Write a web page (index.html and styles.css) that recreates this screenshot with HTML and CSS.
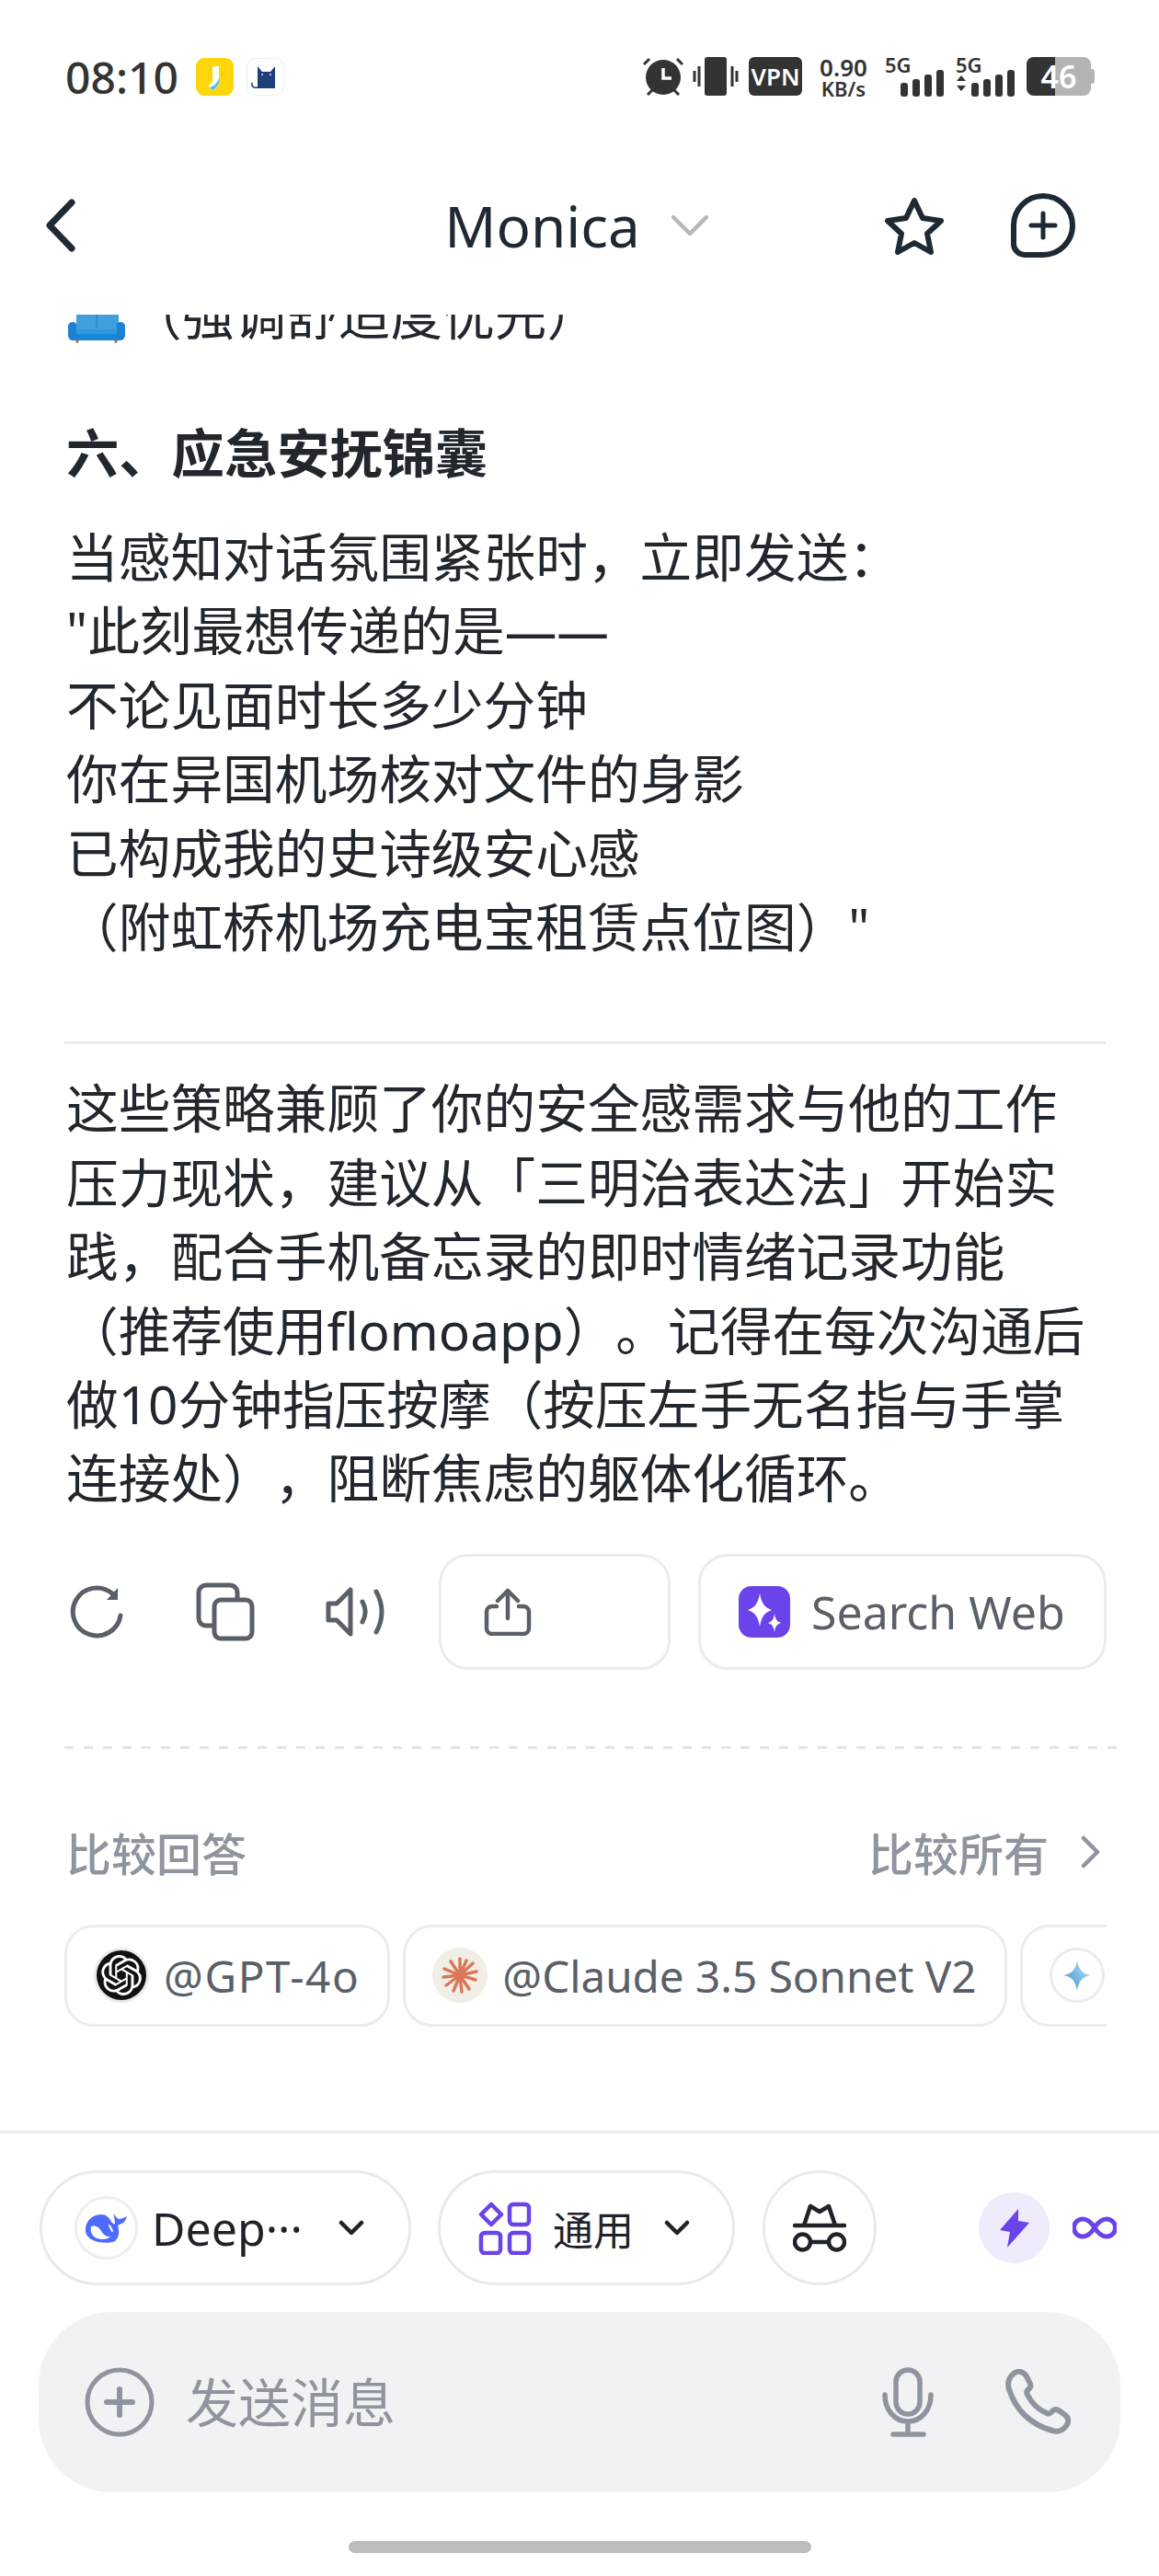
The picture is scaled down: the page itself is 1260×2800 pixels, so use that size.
FILE: index.html
```html
<!DOCTYPE html>
<html lang="zh-CN">
<head>
  <meta charset="UTF-8" />
  <title>Monica</title>
  <link rel="stylesheet" href="styles.css">
</head>
<body>
  <div class="page">

    <div class="status">
      <span class="time">08:10</span>
      <svg class="app-icon" width="41" height="41" viewBox="0 0 41 41"><rect width="41" height="41" rx="9" fill="#ffd60a"/><path d="M18 9h7v17c0 4-3 8-7 9l-5-5c3-1 5-3 5-6z" fill="#fff"/><path d="M25 22c1 6-2 11-7 13l-3-3c4-1 8-4 10-10z" fill="#4fc3d8"/></svg>
      <svg class="app-icon" width="41" height="41" viewBox="0 0 41 41"><rect x=".5" y=".5" width="40" height="40" rx="9" fill="#fff" stroke="#eee"/><path d="M12 9l5 6h9l5-6v24H12z" fill="#1e4079"/><path d="M12 32c-4 1-7-1-6-5" fill="none" stroke="#1e4079" stroke-width="1.5"/><circle cx="17" cy="18" r="1" fill="#dfe7f2"/><circle cx="26" cy="18" r="1" fill="#dfe7f2"/></svg>

      <div class="status-right">
        <svg width="44" height="42" viewBox="0 0 44 42"><circle cx="22" cy="22" r="19" fill="#333"/><path d="M22 12v11h9" fill="none" stroke="#fff" stroke-width="3.500"/><path d="M1 8l6-6M43 8l-6-6M5 41l5-5M39 41l-5-5" stroke="#333" stroke-width="3"/></svg>
        <svg class="ml-10" width="50" height="42" viewBox="0 0 50 42"><rect x="13" width="24" height="42" rx="3" fill="#333"/><path d="M2 15v12M7 10v22M43 10v22M48 15v12" stroke="#333" stroke-width="3"/></svg>
        <span class="vpn">VPN</span>
        <span class="speed"><b>0.90</b><b class="unit">KB/s</b></span>
        <div class="signal">
          <span class="net">5G</span>
          <svg width="47" height="29" viewBox="0 0 47 29"><rect y="14" width="8" height="15" rx="3"/><rect x="13" y="10" width="8" height="19" rx="3"/><rect x="26" y="5" width="8" height="24" rx="3"/><rect x="39" width="8" height="29" rx="3"/></svg>
        </div>
        <div class="signal signal-2">
          <span class="net">5G</span>
          <svg width="64" height="29" viewBox="0 0 64 29"><path d="M1 12l5-6 5 6zM1 17l5 6 5-6z"/><rect x="17" y="14" width="8" height="15" rx="3"/><rect x="30" y="10" width="8" height="19" rx="3"/><rect x="43" y="5" width="8" height="24" rx="3"/><rect x="56" width="8" height="29" rx="3"/></svg>
        </div>
        <div class="battery">
          <div class="battery-fill"></div>
          <span class="battery-num">46</span>
        </div>
      </div>
    </div>

    <div class="nav">
      <svg class="nav-back" width="34" height="58" viewBox="0 0 34 58"><path d="M29 4L5 29l24 25" fill="none" stroke="#1f2933" stroke-width="7" stroke-linecap="round" stroke-linejoin="round"/></svg>
      <div class="nav-title">
        <span>Monica</span>
        <svg width="40" height="22" viewBox="0 0 40 22"><path d="M2 2l18 18L38 2" fill="none" stroke="#b5b9bd" stroke-width="4.500" stroke-linecap="round" stroke-linejoin="round"/></svg>
      </div>
      <div class="nav-actions">
        <svg width="66" height="63" viewBox="0 0 66 63"><path d="M33 4l9 19 20 3-15 14 4 20-18-10-18 10 4-20L4 26l20-3z" fill="none" stroke="#1f2933" stroke-width="6" stroke-linejoin="round"/></svg>
        <svg width="70" height="70" viewBox="0 0 70 70"><path d="M35 3a32 32 0 0 1 0 64H15A12 12 0 0 1 3 55V35A32 32 0 0 1 35 3z" fill="none" stroke="#1f2933" stroke-width="6"/><path d="M35 22v26M22 35h26" stroke="#1f2933" stroke-width="5" stroke-linecap="round"/></svg>
      </div>
    </div>

    <div class="chat">
      <div class="clipped-line">
        <svg width="62" height="58" viewBox="0 0 62 58"><path d="M9 10h46v34H9z" fill="#3fa0dc"/><path d="M30.500 10h1.500v32h-1.500z" fill="#2b86c6"/><path d="M8 43h46v12H8z" fill="#1a86d6"/><path d="M8 43h46v5H8z" fill="#2f97e0"/><path d="M0 40a5 5 0 0 1 9-3v18H5c-3 0-5-3-5-6zM62 40a5 5 0 0 0-9-3v18h4c3 0 5-3 5-6z" fill="#1f7fd0"/><path d="M8 55h4l-1 3h-2zM50 55h4l-1 3h-2z" fill="#b5835f"/></svg>
        <span>（强调舒适度优先）</span>
      </div>

      <h3>六、应急安抚锦囊</h3>
      <p class="first">当感知对话氛围紧张时，立即发送：<br>"此刻最想传递的是——<br>不论见面时长多少分钟<br>你在异国机场核对文件的身影<br>已构成我的史诗级安心感<br>（附虹桥机场充电宝租赁点位图）"</p>

      <hr class="sep">

      <p>这些策略兼顾了你的安全感需求与他的工作<br>压力现状，建议从「三明治表达法」开始实<br>践，配合手机备忘录的即时情绪记录功能<br>（推荐使用flomoapp）。记得在每次沟通后<br>做10分钟指压按摩（按压左手无名指与手掌<br>连接处），阻断焦虑的躯体化循环。</p>

      <div class="actions">
        <svg class="act-refresh" width="60" height="58" viewBox="0 0 60 58"><path d="M56 33A26 26 0 1 1 47 9" fill="none" stroke="#5a6068" stroke-width="5" stroke-linecap="round"/><path d="M53 3v13H41z" fill="#5a6068"/></svg>
        <svg class="act-copy" width="64" height="64" viewBox="0 0 64 64"><rect x="3" y="3" width="42" height="44" rx="8" fill="none" stroke="#5a6068" stroke-width="5"/><rect x="20" y="19" width="41" height="42" rx="7" fill="#fff" stroke="#5a6068" stroke-width="5"/></svg>
        <svg class="act-speak" width="65" height="54" viewBox="0 0 65 54"><path d="M3 18h9L27 3v48L12 36H3z" fill="none" stroke="#5a6068" stroke-width="5" stroke-linejoin="round"/><path d="M40 16c4 7 4 15 0 22M55 5c8 14 8 30 0 44" fill="none" stroke="#5a6068" stroke-width="5" stroke-linecap="round"/></svg>
        <div class="btn btn-share">
          <svg width="52" height="52" viewBox="0 0 52 52"><path d="M26 33V4M15 14L26 3l11 11" fill="none" stroke="#5a6068" stroke-width="4.500" stroke-linecap="round" stroke-linejoin="round"/><path d="M14 20H9a6 6 0 0 0-6 6v18a6 6 0 0 0 6 6h34a6 6 0 0 0 6-6V26a6 6 0 0 0-6-6h-5" fill="none" stroke="#5a6068" stroke-width="4.500" stroke-linecap="round"/></svg>
        </div>
        <div class="btn btn-search">
          <svg width="56" height="56" viewBox="0 0 56 56"><rect width="56" height="56" rx="14" fill="#6a43ea"/><path d="M23 8c2 11 5 15 13 18-8 3-11 7-13 18-2-11-5-15-13-18 8-3 11-7 13-18zM39 30c1 6 2 8 7 10-5 2-6 4-7 10-1-6-2-8-7-10 5-2 6-4 7-10z" fill="#fff"/></svg>
          <span>Search Web</span>
        </div>
      </div>

      <div class="dashed"></div>

      <div class="compare-head">
        <span>比较回答</span>
        <div class="compare-all">
          <span>比较所有</span>
          <svg width="22" height="36" viewBox="0 0 22 36"><path d="M3 3l15 15L3 33" fill="none" stroke="#8f959e" stroke-width="4.500" stroke-linecap="round" stroke-linejoin="round"/></svg>
        </div>
      </div>

      <div class="chips">
        <div class="chip chip-gpt">
          <div class="logo logo-gpt">
            <svg width="44" height="44" viewBox="0 0 24 24"><path fill="#fff" d="M22.2819 9.8211a5.9847 5.9847 0 0 0-.5157-4.9108 6.0462 6.0462 0 0 0-6.5098-2.9A6.0651 6.0651 0 0 0 4.9807 4.1818a5.9847 5.9847 0 0 0-3.9977 2.9 6.0462 6.0462 0 0 0 .7427 7.0966 5.98 5.98 0 0 0 .511 4.9107 6.051 6.051 0 0 0 6.5146 2.9001A5.9847 5.9847 0 0 0 13.2599 24a6.0557 6.0557 0 0 0 5.7718-4.2058 5.9894 5.9894 0 0 0 3.9977-2.9001 6.0557 6.0557 0 0 0-.7475-7.0729zm-9.022 12.6081a4.4755 4.4755 0 0 1-2.8764-1.0408l.1419-.0804 4.7783-2.7582a.7948.7948 0 0 0 .3927-.6813v-6.7369l2.02 1.1686a.071.071 0 0 1 .038.052v5.5826a4.504 4.504 0 0 1-4.4945 4.4944zm-9.6607-4.1254a4.4708 4.4708 0 0 1-.5346-3.0137l.142.0852 4.783 2.7582a.7712.7712 0 0 0 .7806 0l5.8428-3.3685v2.3324a.0804.0804 0 0 1-.0332.0615L9.74 19.9502a4.4992 4.4992 0 0 1-6.1408-1.6464zM2.3408 7.8956a4.485 4.485 0 0 1 2.3655-1.9728V11.6a.7664.7664 0 0 0 .3879.6765l5.8144 3.3543-2.0201 1.1685a.0757.0757 0 0 1-.071 0l-4.8303-2.7865A4.504 4.504 0 0 1 2.3408 7.872zm16.5963 3.8558L13.1038 8.364 15.1192 7.2a.0757.0757 0 0 1 .071 0l4.8303 2.7913a4.4944 4.4944 0 0 1-.6765 8.1042v-5.6772a.79.79 0 0 0-.407-.667zm2.0107-3.0231l-.142-.0852-4.7735-2.7818a.7759.7759 0 0 0-.7854 0L9.409 9.2297V6.8974a.0662.0662 0 0 1 .0284-.0615l4.8303-2.7866a4.4992 4.4992 0 0 1 6.6802 4.66zM8.3065 12.863l-2.02-1.1638a.0804.0804 0 0 1-.038-.0567V6.0742a4.4992 4.4992 0 0 1 7.3757-3.4537l-.142.0805L8.704 5.459a.7948.7948 0 0 0-.3927.6813zm1.0976-2.3654l2.602-1.4998 2.6069 1.4998v2.9994l-2.5974 1.4997-2.6067-1.4997Z"/></svg>
          </div>
          <span>@GPT-4o</span>
        </div>
        <div class="chip">
          <div class="logo logo-claude">
            <svg width="40" height="40" viewBox="0 0 40 40"><g stroke="#d97757" stroke-width="3.400" stroke-linecap="round"><path d="M20 20L20 2M20 20L27 4M20 20L34 7M20 20L38 16M20 20L37 25M20 20L30 35M20 20L22 38M20 20L13 37M20 20L5 31M20 20L2 22M20 20L3 13M20 20L10 5"/></g></svg>
          </div>
          <span>@Claude 3.5 Sonnet V2</span>
        </div>
        <div class="chip chip-clipped">
          <div class="logo logo-gemini">
            <svg width="34" height="36" viewBox="0 0 40 44"><defs><linearGradient id="gem" x1="0" y1="1" x2="1" y2="0"><stop offset="0" stop-color="#2f8fd0"/><stop offset=".6" stop-color="#8cc4e8"/><stop offset="1" stop-color="#d8d8de"/></linearGradient></defs><path d="M20 2c2 12 7 18 18 20-11 2-16 8-18 20-2-12-7-18-18-20 11-2 16-8 18-20z" fill="url(#gem)"/></svg>
          </div>
        </div>
      </div>
    </div>

    <div class="footer">
      <div class="toolbar">
        <div class="pill pill-model">
          <div class="logo-whale">
            <svg width="46" height="32" viewBox="0 0 46 32"><path d="M0 15C2 6 9 1 17 1c5 0 9 3 11 8 2 2 3 3 4 2 0-4-1-8-2-11 2 2 4 5 6 6 2 0 6-1 9-3-1 4-3 7-6 8l-4 2c2 6 2 12-3 17-6 3-18 2-24-1C2 26-1 21 0 15z" fill="#4d6bfe"/><path d="M6 14c4-2 8 0 11 5 3 5 7 7 11 6-6 4-14 4-19 0-3-3-4-7-3-11z" fill="#fff"/><path d="M26 13l3 6" stroke="#fff" stroke-width="2" stroke-linecap="round"/></svg>
          </div>
          <span class="pill-name">Deep···</span>
          <svg class="pill-caret" width="28" height="17" viewBox="0 0 28 17"><path d="M3 3l11 11L25 3" fill="none" stroke="#1f2329" stroke-width="4.500" stroke-linecap="round" stroke-linejoin="round"/></svg>
        </div>
        <div class="pill pill-mode">
          <svg width="58" height="58" viewBox="0 0 58 58"><g fill="none" stroke="#6a43ea" stroke-width="4.500" stroke-linejoin="round"><path d="M14 3l11 11-11 11L3 14z"/><rect x="34" y="3" width="21" height="22" rx="4"/><rect x="3" y="34" width="21" height="22" rx="4"/><rect x="34" y="34" width="21" height="22" rx="4"/></g></svg>
          <span class="pill-cn">通用</span>
          <svg class="pill-caret" width="28" height="17" viewBox="0 0 28 17"><path d="M3 3l11 11L25 3" fill="none" stroke="#1f2329" stroke-width="4.500" stroke-linecap="round" stroke-linejoin="round"/></svg>
        </div>
        <div class="pill pill-spy">
          <svg width="58" height="54" viewBox="0 0 58 54"><g fill="none" stroke="#1f2329" stroke-width="4.500" stroke-linejoin="round"><path d="M2 24h54" stroke-linecap="round"/><path d="M12 24l7-21 10 6 10-6 7 21"/><circle cx="10.500" cy="42" r="8.500"/><circle cx="47.500" cy="42" r="8.500"/><path d="M19 42h20"/></g></svg>
        </div>
        <div class="bolt">
          <svg width="32" height="42" viewBox="0 0 32 42"><path d="M20 0L0 23l11 2-3 17 24-27-12-2z" fill="#6a43ea"/></svg>
        </div>
        <svg class="infinity" width="48" height="25" viewBox="0 0 48 25"><path d="M24 12.500C20 6 16 3 11 3a9.500 9.500 0 0 0 0 19c5 0 9-3 13-9.500C28 6 32 3 37 3a9.500 9.500 0 0 1 0 19c-5 0-9-3-13-9.500z" fill="none" stroke="#6a43ea" stroke-width="5"/></svg>
      </div>

      <div class="input">
        <svg width="76" height="76" viewBox="0 0 76 76"><circle cx="38" cy="38" r="35" fill="none" stroke="#8f959e" stroke-width="5"/><path d="M38 24v28M24 38h28" stroke="#8f959e" stroke-width="6" stroke-linecap="round"/></svg>
        <span class="placeholder">发送消息</span>
        <svg class="input-mic" width="56" height="76" viewBox="0 0 56 76"><rect x="15" y="3" width="26" height="48" rx="13" fill="none" stroke="#8f959e" stroke-width="5.500"/><path d="M3 30c0 17 11 29 25 29s25-12 25-29M28 59v13M12 73h33" fill="none" stroke="#8f959e" stroke-width="5.500" stroke-linecap="round"/></svg>
        <svg class="input-phone" width="72" height="72" viewBox="0 0 72 72"><path d="M10 5C15 1 21 3 24 8l4 8c1 3 0 5-3 7-1 1-1 3 0 5 5 10 11 16 21 20 2 1 4 0 5-1 2-3 5-4 8-2l7 5c4 3 4 8 1 12-4 5-9 7-15 5C28 60 12 44 5 22 3 15 5 9 10 5z" fill="none" stroke="#8f959e" stroke-width="6" stroke-linejoin="round"/></svg>
      </div>

      <div class="home-bar"></div>
    </div>

  </div>
</body>
</html>
```

FILE: styles.css
```css
body {
  margin: 0;
  background: #fff;
  color: #22272e;
  font-family: "Noto Sans", "Noto Sans CJK SC", sans-serif;
  text-spacing-trim: space-all;
}

svg {
  display: block;
  flex: none;
}

.page {
  width: 1260px;
  height: 2800px;
  display: flex;
  flex-direction: column;
  overflow: hidden;
}

/* status bar */
.status {
  display: flex;
  align-items: center;
  height: 42px;
  margin-top: 62px;
  padding: 0 74px 0 71px;
}

.time {
  font-size: 48px;
  font-weight: 500;
  color: #333;
  width: 142px;
  flex: none;
}

.app-icon {
  margin-right: 14px;
}

.status-right {
  margin-left: auto;
  display: flex;
  align-items: center;
  color: #333;
}

.ml-10 {
  margin-left: 10px;
}

.vpn {
  width: 58px;
  height: 42px;
  margin-left: 11px;
  background: #333;
  color: #fff;
  border-radius: 6px;
  font-size: 26px;
  font-weight: 600;
  line-height: 42px;
  text-align: center;
}

.speed {
  display: flex;
  flex-direction: column;
  width: 52px;
  margin-left: 19px;
  align-items: center;
}

.speed b {
  font-size: 26px;
  font-weight: 600;
  line-height: 25px;
}

.speed .unit {
  font-size: 22px;
  line-height: 20px;
}

.signal {
  position: relative;
  width: 64px;
  height: 44px;
  margin-left: 19px;
  display: flex;
  align-items: flex-end;
  justify-content: flex-end;
}

.signal svg {
  fill: #333;
}

.signal-2 {
  width: 64px;
  margin-left: 13px;
}

.net {
  position: absolute;
  left: 0;
  top: -3px;
  font-size: 22px;
  font-weight: 600;
  line-height: 24px;
}

.battery {
  position: relative;
  width: 70px;
  height: 42px;
  margin-left: 13px;
  background: #b4b4b4;
  border-radius: 8px;
}

.battery::after {
  content: "";
  position: absolute;
  left: 70px;
  top: 13px;
  width: 4px;
  height: 16px;
  background: #b4b4b4;
  border-radius: 0 3px 3px 0;
}

.battery-fill {
  width: 31px;
  height: 42px;
  background: #333;
  border-radius: 8px 0 0 8px;
}

.battery-num {
  position: absolute;
  left: 0;
  top: 0;
  width: 70px;
  text-align: center;
  color: #fff;
  font-size: 34px;
  font-weight: 600;
  line-height: 42px;
}

/* title row */
.nav {
  display: grid;
  grid-template-columns: 1fr auto 1fr;
  align-items: center;
  height: 70px;
  margin-top: 106px;
  margin-bottom: 62px;
  flex: none;
}

.nav-back {
  margin-left: 49px;
}

.nav-title {
  display: flex;
  align-items: center;
  gap: 34px;
  margin-left: -7px;
  font-size: 62px;
  color: #1f2933;
  line-height: 70px;
}

.nav-actions {
  display: flex;
  align-items: center;
  justify-content: flex-end;
  gap: 72px;
  padding-right: 91px;
}

/* chat content */
.chat {
  flex: 1;
  min-height: 0;
  overflow: hidden;
  padding: 0 57px 0 70px;
}

.clipped-line {
  display: flex;
  align-items: flex-end;
  height: 80px;
  margin-top: -40px;
  padding-left: 4px;
  font-size: 56.700px;
  line-height: 80px;
}

.clipped-line svg {
  margin-bottom: 9px;
  margin-right: 5px;
}

.chat h3 {
  margin: 70px 0 0;
  padding-left: 2px;
  font-size: 57.300px;
  line-height: 80px;
  font-weight: 700;
}

.chat p {
  margin: 0;
  padding-left: 2px;
  font-size: 56.700px;
  line-height: 80.400px;
  white-space: nowrap;
}

.chat p.first {
  margin-top: 33px;
}

.sep {
  margin: 85px 1px 29px 0;
  border: 0;
  height: 3px;
  background: #ececec;
}

.actions {
  display: flex;
  align-items: center;
  margin-top: 42px;
  height: 126px;
}

.act-refresh {
  margin-left: 5px;
}

.act-copy {
  margin-left: 78px;
}

.act-speak {
  margin-left: 77px;
}

.btn {
  display: flex;
  align-items: center;
  box-sizing: border-box;
  height: 126px;
  border: 3px solid #ececec;
  border-radius: 32px;
}

.btn-share {
  width: 252px;
  margin-left: 58px;
  padding-left: 46px;
}

.btn-search {
  width: 444px;
  margin-left: 30px;
  padding-left: 41px;
  gap: 23px;
  font-size: 50px;
  color: #5a6068;
}

.dashed {
  height: 3px;
  margin-top: 83px;
  margin-right: -12px;
  background: repeating-linear-gradient(90deg, #e4e4e4 0 10px, transparent 10px 21px);
}

.compare-head {
  display: flex;
  align-items: center;
  justify-content: space-between;
  height: 60px;
  margin-top: 82px;
  padding-left: 2px;
  font-size: 49px;
  font-weight: 500;
  color: #8f959e;
}

.compare-all {
  display: flex;
  align-items: center;
  gap: 35px;
  padding-right: 6px;
}

.chips {
  display: flex;
  gap: 14px;
  margin-top: 49px;
  overflow: hidden;
}

.chip {
  display: flex;
  align-items: center;
  box-sizing: border-box;
  flex: none;
  height: 111px;
  padding: 0 30px 0 29px;
  gap: 16px;
  border: 3px solid #ececec;
  border-radius: 32px;
  font-size: 47.600px;
  color: #5a6068;
}

.chip-gpt {
  letter-spacing: 1.600px;
}

.chip-clipped {
  padding-right: 60px;
}

.logo {
  display: flex;
  align-items: center;
  justify-content: center;
  width: 60px;
  height: 60px;
  border-radius: 50%;
  flex: none;
}

.logo-gpt {
  background: #111;
  border: 3px solid #ececec;
  box-sizing: border-box;
}

.logo-claude {
  background: #f0eee6;
}

.logo-gemini {
  background: #fff;
  border: 3px solid #ececec;
  box-sizing: border-box;
}

/* bottom bar */
.footer {
  flex: none;
  border-top: 3px solid #eeeeee;
}

.toolbar {
  display: flex;
  align-items: center;
  padding: 40px 46px 0 43px;
}

.pill {
  display: flex;
  align-items: center;
  box-sizing: border-box;
  height: 125px;
  border: 3px solid #e9e9e9;
  border-radius: 63px;
}

.pill-model {
  width: 404px;
  padding-left: 35px;
}

.logo-whale {
  display: flex;
  align-items: center;
  justify-content: center;
  box-sizing: border-box;
  width: 69px;
  height: 69px;
  border: 3px solid #eeeeee;
  border-radius: 50%;
  flex: none;
}

.pill-name {
  margin-left: 15px;
  width: 203px;
  font-size: 50px;
  color: #1f2329;
}

.pill-mode {
  width: 323px;
  margin-left: 29px;
  padding-left: 41px;
}

.pill-cn {
  margin-left: 23px;
  margin-right: 33px;
  font-size: 44px;
  color: #1f2329;
}

.pill-spy {
  justify-content: center;
  width: 124px;
  margin-left: 30px;
}

.bolt {
  display: flex;
  align-items: center;
  justify-content: center;
  width: 77px;
  height: 77px;
  margin-left: auto;
  background: #efeafc;
  border-radius: 50%;
}

.infinity {
  margin-left: 25px;
}

.input {
  display: flex;
  align-items: center;
  box-sizing: border-box;
  height: 196px;
  margin: 29px 42px 0;
  padding: 0 54px 0 50px;
  background: #f0f2f4;
  border-radius: 80px;
}

.placeholder {
  margin-left: 34px;
  margin-bottom: 6px;
  font-size: 57px;
  color: #8f959e;
}

.input-mic {
  margin-left: auto;
}

.input-phone {
  margin-left: 77px;
}

.home-bar {
  width: 503px;
  height: 13px;
  margin: 53px auto 25px;
  background: #bcbcbc;
  border-radius: 7px;
}
```
